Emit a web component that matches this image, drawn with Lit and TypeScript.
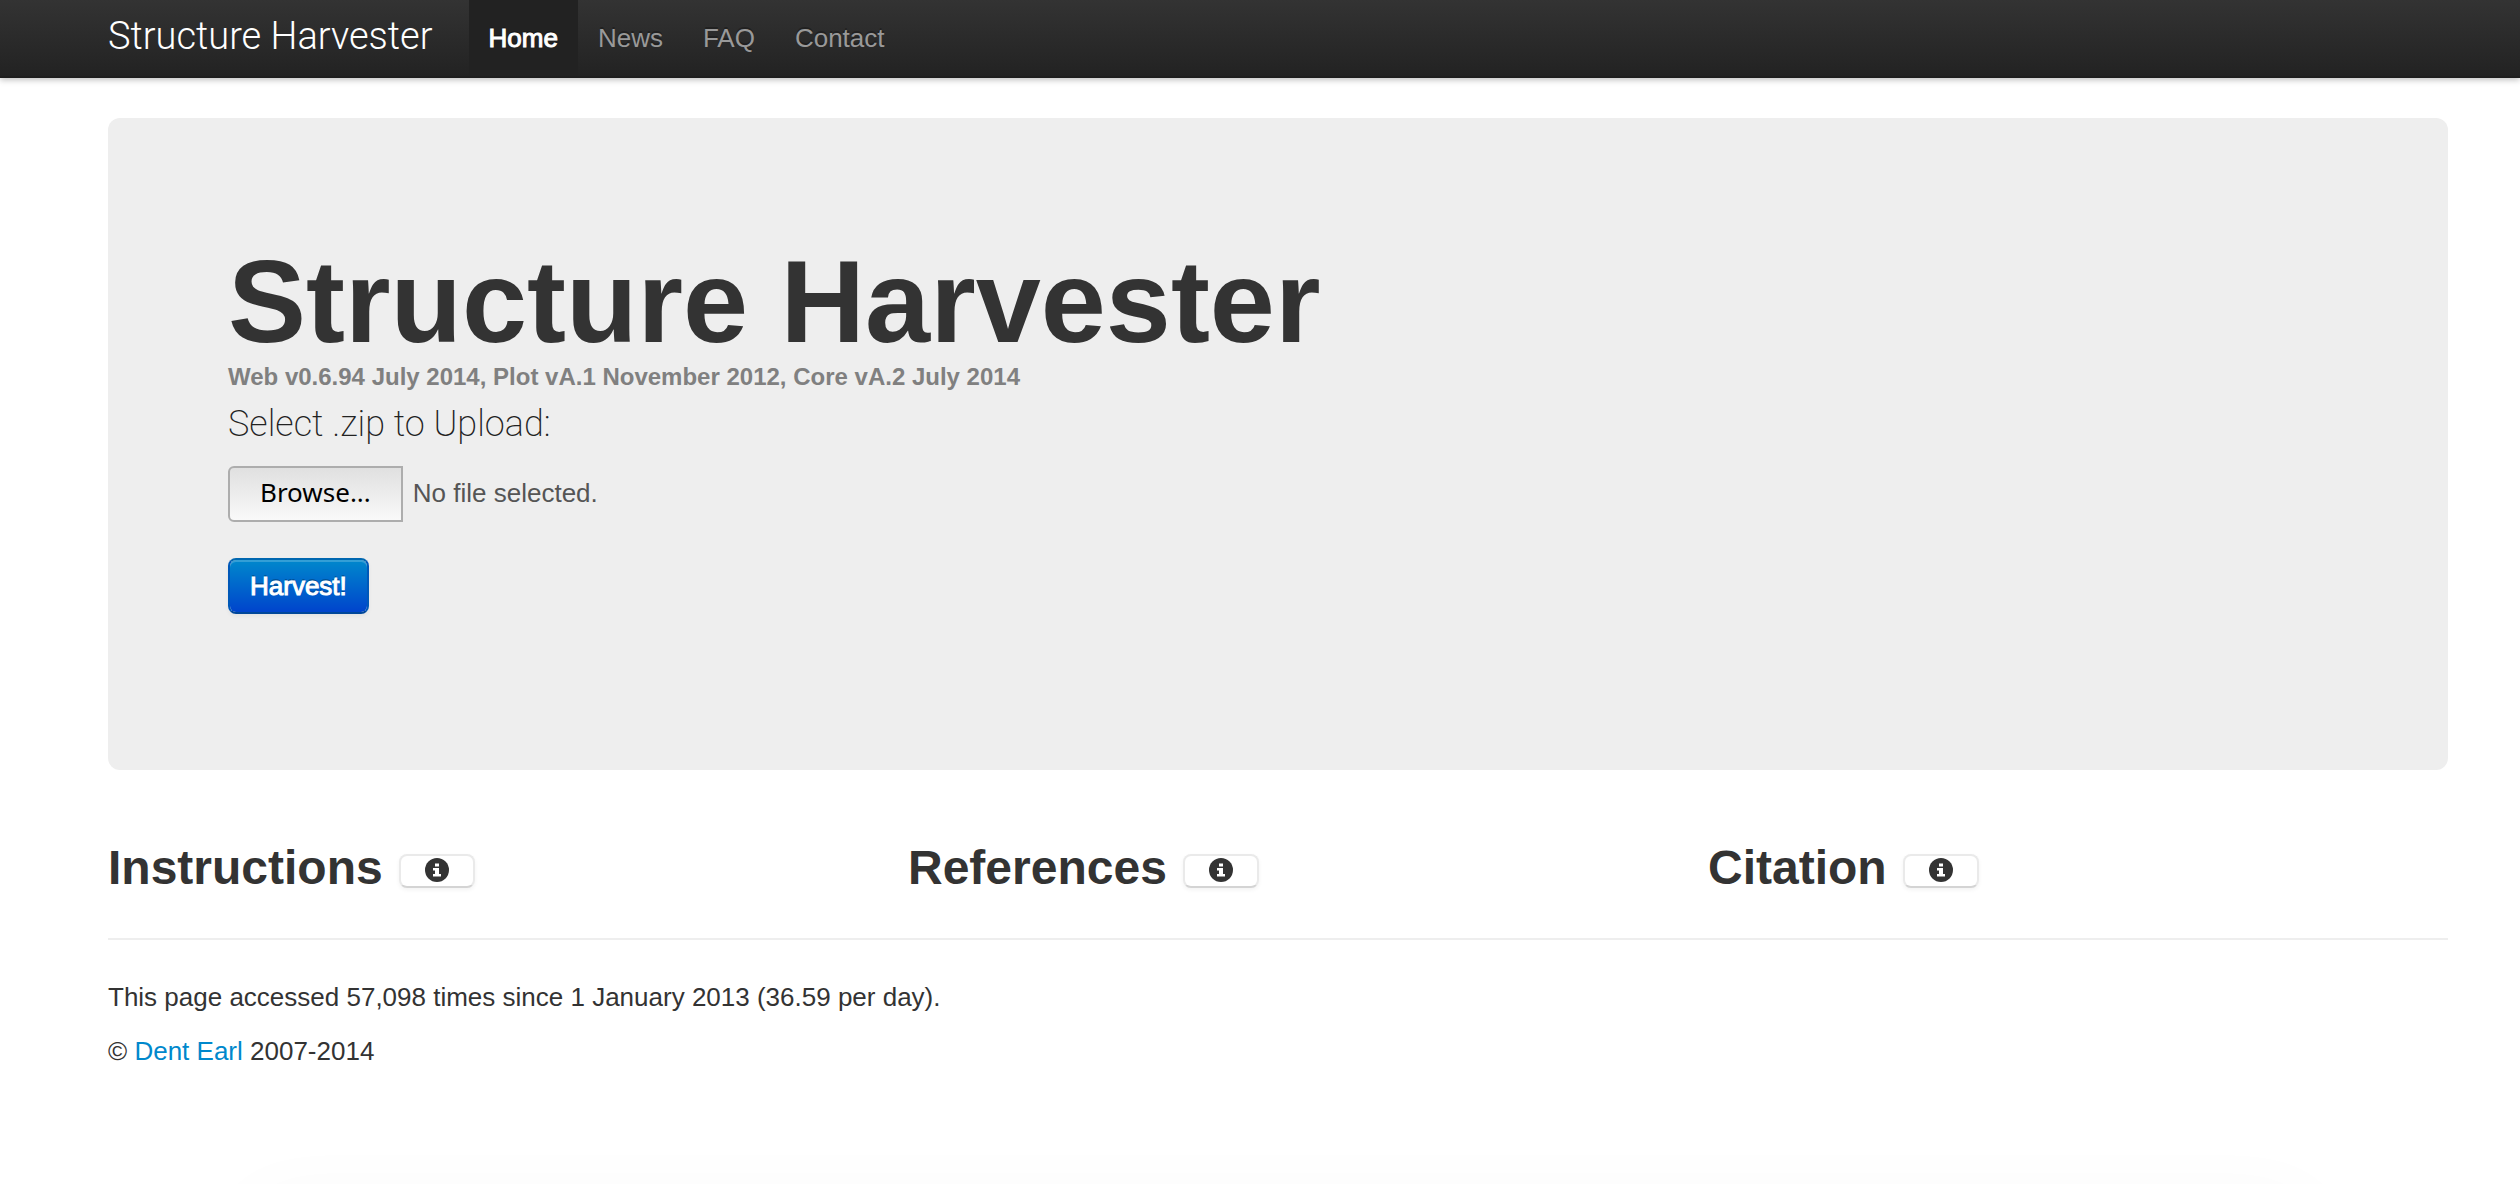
import { LitElement, html, css, svg } from "lit";
import { customElement, state } from "lit/decorators.js";

const infoIcon = svg`
  <circle cx="12" cy="12" r="12" fill="#333"></circle>
  <path fill="#fff" d="M10 5.5h4v3h-4zM8 10h6v6h2v2.500H8V16h2v-3.500H8z"></path>`;

@customElement("app-root")
export class AppRoot extends LitElement {
  static styles = css`
    :host {
      display: block;
      min-height: 100vh;
      background: #fff;
      color: #333;
      font-family: "Liberation Sans", Arial, sans-serif;
      font-size: 26px;
      line-height: 36px;
    }
    * {
      box-sizing: border-box;
    }
    .navbar {
      display: flex;
      height: 78px;
      padding-left: 108px;
      background: linear-gradient(#333, #222);
      box-shadow: 0 2px 6px rgba(0, 0, 0, 0.25), inset 0 -2px 0 rgba(0, 0, 0, 0.1);
    }
    .brand {
      padding-right: 36px;
      color: #fff;
      font-family: Roboto, sans-serif;
      font-size: 38px;
      font-weight: 300;
      line-height: 72px;
      text-decoration: none;
    }
    .menu {
      display: flex;
      margin: 0;
      padding: 0;
      list-style: none;
    }
    .menu a {
      display: block;
      height: 76px;
      padding: 0 20px;
      color: #999;
      line-height: 76px;
      text-decoration: none;
      text-shadow: 0 -2px 0 rgba(0, 0, 0, 0.25);
    }
    .menu .active {
      background: #222;
      color: #fff;
      -webkit-text-stroke: 1px #fff;
    }
    .content {
      padding: 40px 72px 60px 108px;
    }
    .hero {
      padding: 120px 120px 156px;
      border-radius: 12px;
      background: #eee;
    }
    h1 {
      margin: 0;
      font-size: 117px;
      line-height: 128px;
    }
    .version {
      margin: 0;
      color: #808080;
      font-size: 24px;
      font-weight: bold;
      line-height: 22px;
    }
    .prompt {
      display: block;
      color: #222;
      font-family: Roboto, sans-serif;
      font-size: 36px;
      font-weight: 200;
      line-height: 72px;
    }
    .file {
      display: flex;
      align-items: center;
      gap: 10px;
      margin: 6px 0 36px;
      color: #555;
    }
    .file span {
      padding-bottom: 2px;
    }
    button {
      margin: 0;
      color: inherit;
      font: inherit;
      cursor: pointer;
    }
    .browse {
      height: 56px;
      padding: 0 30px 4px;
      border: 2px solid #adadad;
      border-radius: 6px 0 0 6px;
      background: linear-gradient(#e0e0e0, #f9f9f9);
      color: #000;
      font-family: "Noto Sans", sans-serif;
    }
    .harvest {
      display: block;
      height: 56px;
      padding: 0 20px;
      border: 2px solid;
      border-color: #0067b0 #0058b8 #00479a;
      border-radius: 8px;
      background: linear-gradient(#08c, #04c) padding-box;
      box-shadow: inset 0 2px 0 rgba(255, 255, 255, 0.2), 0 2px 4px rgba(0, 0, 0, 0.05);
      color: #fff;
      text-shadow: 0 -2px 0 rgba(0, 0, 0, 0.25);
      -webkit-text-stroke: 1px #fff;
    }
    .topics {
      display: grid;
      grid-template-columns: repeat(3, 1fr);
      gap: 60px;
      padding: 62px 0 34px;
      border-bottom: 2px solid #eee;
    }
    .topic {
      display: flex;
      align-items: center;
      gap: 16px;
    }
    h2 {
      margin: 0;
      font-size: 48px;
      line-height: 72px;
    }
    .info {
      display: flex;
      justify-content: center;
      width: 76px;
      height: 34px;
      margin-top: 6px;
      padding: 2px 0 0;
      border: 2px solid #eaeaea;
      border-bottom-color: #d4d4d4;
      border-radius: 8px;
      background: #fff;
      box-shadow: 0 2px 4px rgba(0, 0, 0, 0.05);
    }
    .info svg {
      display: block;
      width: 24px;
      height: 24px;
    }
    footer {
      padding-top: 39px;
    }
    footer p {
      margin: 0 0 18px;
    }
    footer a {
      color: #08c;
      text-decoration: none;
    }
    .shade {
      position: fixed;
      right: 210px;
      bottom: -66px;
      left: 250px;
      height: 40px;
      border-radius: 20px;
      box-shadow: 0 0 80px rgba(0, 0, 0, 0.05);
      pointer-events: none;
    }
  `;

  @state() private fileName = "No file selected.";

  private pick() {
    this.renderRoot.querySelector<HTMLInputElement>("#archive")?.click();
  }

  private picked(e: Event) {
    const input = e.target as HTMLInputElement;
    this.fileName = input.files?.[0]?.name ?? "No file selected.";
  }

  render() {
    return html`
      <nav class="navbar">
        <a class="brand" href="#">Structure Harvester</a>
        <ul class="menu">
          <li><a class="active" href="#">Home</a></li>
          <li><a href="#news">News</a></li>
          <li><a href="#faq">FAQ</a></li>
          <li><a href="#contact">Contact</a></li>
        </ul>
      </nav>
      <div class="content">
        <main class="hero">
          <h1>Structure Harvester</h1>
          <p class="version">Web v0.6.94 July 2014, Plot vA.1 November 2012, Core vA.2 July 2014</p>
          <form @submit=${(e: Event) => e.preventDefault()}>
            <label class="prompt" for="archive">Select .zip to Upload:</label>
            <div class="file">
              <input id="archive" type="file" accept=".zip" hidden @change=${this.picked} />
              <button class="browse" type="button" @click=${this.pick}>Browse...</button>
              <span>${this.fileName}</span>
            </div>
            <button class="harvest" type="submit">Harvest!</button>
          </form>
        </main>
        <section class="topics">
          ${["Instructions", "References", "Citation"].map(
            (name) => html`
              <div class="topic">
                <h2>${name}</h2>
                <button class="info" type="button" aria-label=${name}>
                  <svg viewBox="0 0 24 24" aria-hidden="true">${infoIcon}</svg>
                </button>
              </div>
            `
          )}
        </section>
        <footer>
          <p>This page accessed 57,098 times since 1 January 2013 (36.59 per day).</p>
          <p>© <a href="#dent-earl">Dent Earl</a> 2007-2014</p>
        </footer>
      </div>
      <div class="shade"></div>
    `;
  }
}
